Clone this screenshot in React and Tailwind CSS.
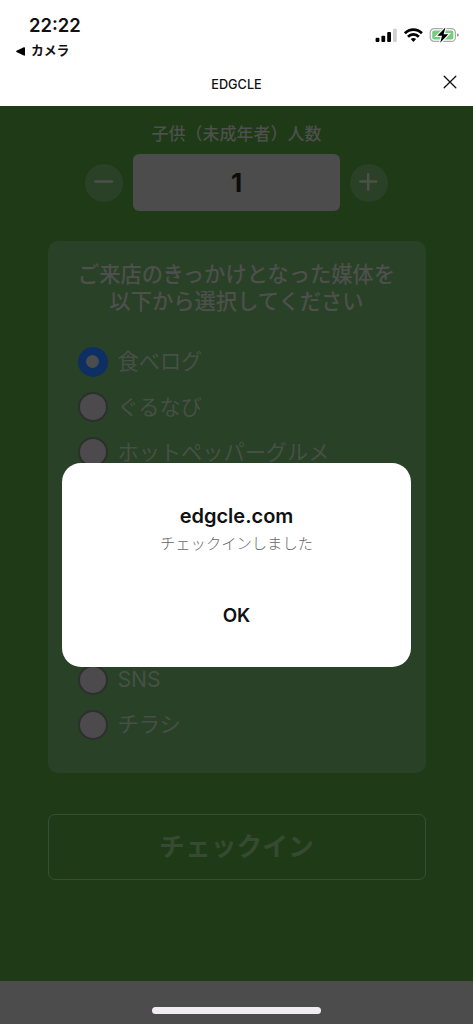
import { useState } from 'react';

const firstMedia = ['食べログ', 'ぐるなび', 'ホットペッパーグルメ'];
const lastMedia = ['SNS', 'チラシ'];

function StatusBar() {
  return (
    <div className="flex h-[62px] items-start justify-between">
      <div className="pt-[13px]">
        <p className="pl-[29px] text-[18.4px] leading-6 font-semibold">22:22</p>
        <div className="flex items-center gap-[5px] pl-[16px] pt-[5px]">
          <svg width="10" height="9" viewBox="0 0 10 9" fill="#000">
            <path d="M0.5 3.8 7.8 0.3Q9 0 9 1V8Q9 8.9 7.8 8.6L0.5 5.1Q-0.2 4.5 0.5 3.8Z" />
          </svg>
          <span className="text-[12.8px] leading-[18px] font-bold">カメラ</span>
        </div>
      </div>

      <div className="flex items-center pt-[26px] pr-[13px]">
        {/* Signal */}
        <svg width="23" height="16" viewBox="0 0 23 16">
          <rect x="0.6" y="10.8" width="3.8" height="4.2" rx="1" />
          <rect x="6.4" y="8.8" width="3.8" height="6.2" rx="1" />
          <rect x="12.2" y="5" width="3.8" height="10" rx="1" />
          <rect x="18" y="1.8" width="3.8" height="13.2" rx="1" fill="#cfcfcf" />
        </svg>
        {/* Wifi */}
        <svg className="ml-[6px]" width="19" height="16" viewBox="0 0 19 16" fill="none" stroke="#000" strokeWidth="2.7">
          <path d="M0.9 6.3Q4.6 2.6 9.4 2.6T17.9 6.3" />
          <path d="M4 9.7Q6.3 7.3 9.4 7.3T14.8 9.7" />
          <path d="M6.7 12.1Q9.4 9.9 12.1 12.1L9.4 15.1Z" fill="#000" stroke="none" />
        </svg>
        {/* Battery */}
        <svg className="ml-[6px]" width="31" height="18" viewBox="0 0 31 18">
          <rect x="1.2" y="2.6" width="25.2" height="12.8" rx="4" fill="none" stroke="#aaa" strokeWidth="1.2" />
          <rect x="3.2" y="4.5" width="21.2" height="9" rx="2" fill="#75cd80" />
          <path d="M28 7.2Q30 8 30 9T28 10.8Z" fill="#999" />
          <path d="M16.4 1.6 8.3 9.7H13L11.2 16.7 19.3 8.3H14.6Z" fill="#000" stroke="#fff" strokeWidth="2.4" paintOrder="stroke" />
        </svg>
      </div>
    </div>
  );
}

function RadioRow({ label, checked, onSelect }) {
  return (
    <button role="radio" aria-checked={checked} onClick={onSelect} className="flex h-[45.4px] items-center gap-[10px] text-left">
      {checked ? (
        <span className="flex size-[30px] items-center justify-center rounded-full bg-[#0e2f63]">
          <span className="size-[13px] rounded-full bg-[#4c4c4c]" />
        </span>
      ) : (
        <span className="size-[30px] rounded-full border-2 border-[#2c302c] bg-[#4c4a4c]" />
      )}
      <span className="pb-px text-[21.2px] leading-[30px] font-normal text-[#475046]">{label}</span>
    </button>
  );
}

export default function App() {
  const [media, setMedia] = useState('食べログ');
  const [count, setCount] = useState(1);
  const [open, setOpen] = useState(true);

  const row = (label) => (
    <RadioRow key={label} label={label} checked={media === label} onSelect={() => setMedia(label)} />
  );

  return (
    <div className="relative flex h-[1024px] w-[473px] flex-col overflow-hidden bg-white font-[Inter,'Noto_Sans_CJK_JP',sans-serif] text-[#111]">
      <header className="h-[106px] shrink-0">
        <StatusBar />
        <div className="grid h-[44px] grid-cols-3 items-center">
          <span />
          <h1 className="pt-px text-center text-[12.7px] font-medium">EDGCLE</h1>
          <button aria-label="閉じる" className="mr-[16px] justify-self-end pb-[4px]">
            <svg width="14" height="14" viewBox="0 0 14 14" fill="none" stroke="#111" strokeWidth="1.3" strokeLinecap="round">
              <path d="M1.2 1.2 12.8 12.8M12.8 1.2 1.2 12.8" />
            </svg>
          </button>
        </div>
      </header>

      <main className="flex flex-1 flex-col bg-[#1f3a17] px-[47.5px] pt-[15px] text-[#4d504c]">
        <h2 className="text-center text-[17px] leading-[26px] font-medium">子供（未成年者）人数</h2>
        <div className="mt-[7px] flex items-center justify-center gap-[10px]">
          <button aria-label="減らす" onClick={() => setCount((c) => Math.max(0, c - 1))} className="flex size-[38px] items-center justify-center rounded-full bg-[#2b4127]">
            <svg width="20" height="20" viewBox="0 0 20 20" stroke="#4c504b" strokeWidth="2.4" strokeLinecap="round">
              <path d="M1.5 8.5H18" />
            </svg>
          </button>
          <div className="flex h-[57px] w-[207px] items-center justify-center rounded-[6px] bg-[#4c4c4c] text-[26px] font-bold text-[#0c0c0c]">
            {count}
          </div>
          <button aria-label="増やす" onClick={() => setCount((c) => c + 1)} className="flex size-[38px] items-center justify-center rounded-full bg-[#2b4127]">
            <svg width="20" height="20" viewBox="0 0 20 20" stroke="#4c504b" strokeWidth="2.4" strokeLinecap="round">
              <path d="M1.2 8.5H17.2M9.2 0.8V16.8" />
            </svg>
          </button>
        </div>

        <section className="mt-[30px] flex h-[532px] shrink-0 flex-col rounded-[10px] bg-[#294126] px-[30px] pt-[20px]">
          <h2 className="self-center text-center text-[21.3px] leading-[26.5px] font-medium whitespace-nowrap">
            ご来店のきっかけとなった媒体を
            <br />
            以下から選択してください
          </h2>
          <div role="radiogroup" className="mt-[25px] flex h-[408.6px] flex-col justify-between">
            <div className="flex flex-col">{firstMedia.map(row)}</div>
            <div className="flex flex-col">{lastMedia.map(row)}</div>
          </div>
        </section>

        <button className="mt-[41px] h-[66px] shrink-0 rounded-[7px] border border-[#3b4c37] text-[25.8px] font-bold text-[#364a32]">
          チェックイン
        </button>
      </main>

      <footer className="flex h-[43px] shrink-0 justify-center bg-[#4c4c4c] pt-[26px]">
        <div className="h-[7px] w-[169px] rounded-full bg-[#efedef]" />
      </footer>

      {/* Dialog */}
      {open && (
        <div role="dialog" className="absolute top-[463px] left-[62px] flex h-[204px] w-[349px] flex-col items-center rounded-[19px] bg-white pt-[41px]">
          <p className="text-[20px] leading-6 font-semibold">edgcle.com</p>
          <p className="mt-[4px] text-[15.3px] leading-6 font-light text-[#666]">チェックインしました</p>
          <button onClick={() => setOpen(false)} className="mt-[46px] px-8 text-[18.8px] leading-7 font-semibold">OK</button>
        </div>
      )}
    </div>
  );
}
